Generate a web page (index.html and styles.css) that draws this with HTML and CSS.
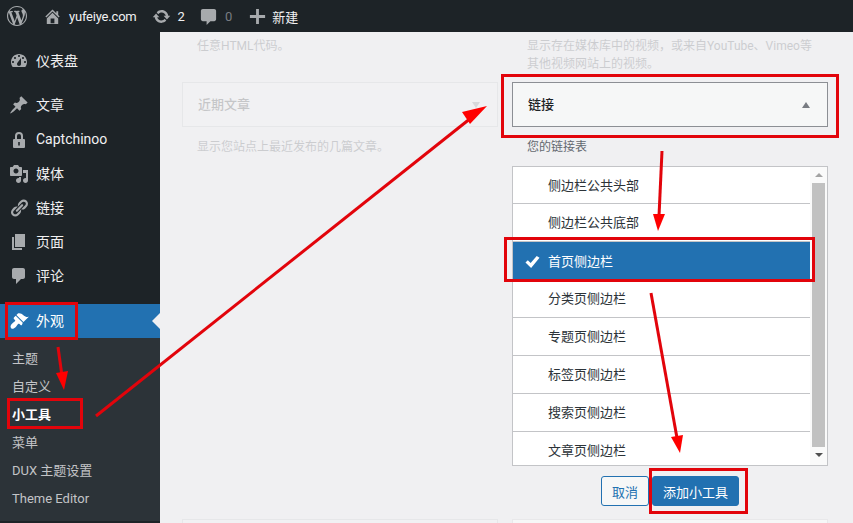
FILE: index.html
```html
<!DOCTYPE html>
<html lang="zh-CN">
<head>
    <meta charset="UTF-8">
    <title>小工具 ‹ yufeiye.com</title>
    <link rel="stylesheet" href="styles.css">
</head>
<body>
    <header class="adminbar">
        <svg class="bar-logo" viewBox="0 0 20 20"><path d="M20 10c0-5.51-4.49-10-10-10C4.48 0 0 4.49 0 10c0 5.52 4.48 10 10 10 5.51 0 10-4.48 10-10zM7.78 15.37L4.37 6.22c.55-.02 1.17-.08 1.17-.08.5-.06.44-1.13-.06-1.11 0 0-1.45.11-2.37.11-.18 0-.37 0-.58-.01C4.12 2.69 6.87 1.11 10 1.11c2.33 0 4.45.87 6.05 2.34-.68-.11-1.65.39-1.65 1.58 0 .74.45 1.36.9 2.1.35.61.55 1.36.55 2.46 0 1.49-1.4 5-1.4 5l-3.03-8.37c.54-.02.82-.17.82-.17.5-.05.44-1.25-.06-1.22 0 0-1.44.12-2.38.12-.87 0-2.33-.12-2.33-.12-.5-.03-.56 1.2-.06 1.22l.92.08 1.26 3.41zM17.41 10c.24-.64.74-1.87.43-4.25.7 1.29 1.05 2.71 1.05 4.25 0 3.29-1.73 6.24-4.4 7.78.97-2.59 1.94-5.2 2.92-7.78zM6.1 18.09C3.12 16.65 1.11 13.53 1.11 10c0-1.3.23-2.48.72-3.59C3.25 10.3 4.67 14.2 6.1 18.09zm4.03-6.63l2.58 6.98c-.86.29-1.76.45-2.71.45-.79 0-1.57-.11-2.29-.33.81-2.38 1.62-4.74 2.42-7.1z"/></svg>
        <a class="bar-item site">
            <svg class="bar-icon" viewBox="0 0 20 20"><path d="M16 8.5l1.53 1.53-1.06 1.06L10 4.62l-6.47 6.47-1.06-1.06L10 2.5l4 4v-2h2v4zm-6-2.46l6 5.99V18H4v-5.97zM12 17v-5H8v5h4z"/></svg>
            <span>yufeiye.com</span>
        </a>
        <a class="bar-item updates">
            <svg class="bar-icon" viewBox="0 0 20 20"><path d="M10.2 3.28c3.53 0 6.43 2.61 6.92 6h2.08l-3.5 4-3.5-4h2.32c-.45-1.97-2.21-3.45-4.32-3.45-1.45 0-2.73.71-3.54 1.78L4.95 5.66C6.23 4.2 8.11 3.28 10.2 3.28zm-.4 13.44c-3.52 0-6.43-2.61-6.92-6H.8l3.5-4c1.17 1.33 2.33 2.67 3.5 4H5.48c.45 1.97 2.21 3.45 4.32 3.45 1.45 0 2.73-.71 3.54-1.78l1.71 1.95c-1.28 1.46-3.15 2.38-5.25 2.38z"/></svg>
            <span>2</span>
        </a>
        <a class="bar-item comments">
            <svg class="bar-icon" viewBox="0 0 20 20"><path d="M4 2h12c1.100 0 2 .9 2 2v9c0 1.100-.9 2-2 2h-4l-4 4v-4H4c-1.100 0-2-.9-2-2V4c0-1.100.9-2 2-2z"/></svg>
            <span class="count-zero">0</span>
        </a>
        <a class="bar-item new">
            <svg class="bar-icon" viewBox="0 0 20 20"><path d="M11.500 2v6.500H18v3h-6.500V18h-3v-6.500H2v-3h6.500V2z"/></svg>
            <span>新建</span>
        </a>
    </header>

    <div class="layout">
        <aside class="sidebar">
            <ul class="menu">
                <li class="menu-item dash">
                    <svg class="menu-icon" viewBox="0 0 20 20"><path d="M3.76 16h12.48c1.100-1.370 1.760-3.110 1.760-5 0-4.420-3.580-8-8-8s-8 3.580-8 8c0 1.890.66 3.630 1.760 5zM10 4c.55 0 1 .45 1 1s-.45 1-1 1-1-.45-1-1 .45-1 1-1zM6 6c.55 0 1 .45 1 1s-.45 1-1 1-1-.45-1-1 .45-1 1-1zm8 0c.55 0 1 .45 1 1s-.45 1-1 1-1-.45-1-1 .45-1 1-1zm-5.370 5.550L12 7v6c0 1.100-.9 2-2 2s-2-.9-2-2c0-.57.24-1.080.63-1.450zM4 10c.55 0 1 .45 1 1s-.45 1-1 1-1-.45-1-1 .45-1 1-1zm12 0c.55 0 1 .45 1 1s-.45 1-1 1-1-.45-1-1 .45-1 1-1z"/></svg>
                    <span>仪表盘</span>
                </li>
                <li class="menu-item posts">
                    <svg class="menu-icon" viewBox="0 0 20 20"><path d="M10.44 3.020l1.820-1.820 6.360 6.350-1.830 1.820c-1.050-.68-2.480-.57-3.410.36l-.75.75c-.92.93-1.040 2.350-.35 3.410l-1.830 1.820-2.410-2.410-2.800 2.790c-.42.42-3.380 2.710-3.800 2.290s1.860-3.390 2.280-3.810l2.790-2.790L4.100 9.360l1.830-1.820c1.050.69 2.480.57 3.400-.36l.75-.75c.93-.92 1.050-2.350.36-3.410z"/></svg>
                    <span>文章</span>
                </li>
                <li class="menu-item">
                    <svg class="menu-icon" viewBox="0 0 20 20"><path fill-rule="evenodd" d="M14 9h1a1 1 0 0 1 1 1v7a1 1 0 0 1-1 1H5a1 1 0 0 1-1-1v-7a1 1 0 0 1 1-1h1V6a4 4 0 0 1 8 0zM8 9h4V6a2 2 0 0 0-4 0zm1.200 3v3.500h1.600V12z"/></svg>
                    <span>Captchinoo</span>
                </li>
                <li class="menu-item">
                    <svg class="menu-icon" viewBox="0 0 20 20"><path d="M13 11V4c0-.55-.45-1-1-1h-1.670L9 1H5L3.670 3H2c-.55 0-1 .45-1 1v7c0 .55.45 1 1 1h10c.55 0 1-.45 1-1zM7 4.500c1.380 0 2.500 1.120 2.500 2.500S8.380 9.500 7 9.500 4.500 8.380 4.500 7 5.620 4.500 7 4.500zM14 6h5v10.500c0 1.380-1.120 2.500-2.500 2.500S14 17.880 14 16.500s1.120-2.500 2.500-2.500c.17 0 .34.02.5.05V9h-3V6zm-4 8.050V13h2v3.500c0 1.380-1.120 2.500-2.500 2.500S7 17.880 7 16.500 8.120 14 9.500 14c.17 0 .34.02.5.05z"/></svg>
                    <span>媒体</span>
                </li>
                <li class="menu-item">
                    <svg class="menu-icon" viewBox="0 0 20 20"><path d="M17.740 2.760c1.680 1.690 1.680 4.410 0 6.100l-1.530 1.520c-1.120 1.120-2.700 1.470-4.140 1.090l2.620-2.610.76-.77.76-.76c.84-.84.84-2.200 0-3.040-.84-.85-2.200-.85-3.040 0l-.77.76-3.380 3.380c-.37-1.440-.02-3.020 1.100-4.140l1.520-1.530c1.690-1.680 4.420-1.680 6.100 0zM8.590 13.430l5.340-5.340c.42-.42.42-1.100 0-1.520-.44-.43-1.130-.39-1.530 0l-5.330 5.340c-.42.42-.42 1.100 0 1.520.44.43 1.130.39 1.520 0zm-.76 2.290l4.140-4.150c.38 1.440.03 3.020-1.090 4.140l-1.520 1.530c-1.690 1.680-4.410 1.680-6.100 0-1.680-1.680-1.680-4.420 0-6.100l1.530-1.520c1.120-1.120 2.700-1.470 4.140-1.100l-4.140 4.150c-.85.84-.85 2.200 0 3.050.84.84 2.200.84 3.040 0z"/></svg>
                    <span>链接</span>
                </li>
                <li class="menu-item">
                    <svg class="menu-icon" viewBox="0 0 20 20"><path d="M6 15V2h10v13H6zm-1 1h8v2H3V5h2v11z"/></svg>
                    <span>页面</span>
                </li>
                <li class="menu-item">
                    <svg class="menu-icon" viewBox="0 0 20 20"><path d="M5 2h9c1.100 0 2 .9 2 2v7c0 1.100-.9 2-2 2h-2l-5 5v-5H5c-1.100 0-2-.9-2-2V4c0-1.100.9-2 2-2z"/></svg>
                    <span>评论</span>
                </li>
                <li class="menu-item current">
                    <svg class="menu-icon" viewBox="0 0 20 20"><path d="M14.480 11.060L7.410 3.990l1.500-1.500c.5-.56 2.300-.47 3.510.32 1.210.8 1.430 1.280 2.910 2.100 1.180.64 2.450 1.260 4.450.85zm-.71.71L6.700 4.700 4.930 6.470c-.39.39-.39 1.020 0 1.410l1.060 1.060c.39.39.39 1.030 0 1.420-.6.6-1.430 1.110-2.210 1.690-.35.26-.7.53-1.010.84-1.340 1.340-1.660 3.230-.57 4.310s3.010.3 4.340-1.010c.31-.31.58-.66.84-1.010.58-.78 1.100-1.610 1.690-2.210.39-.39 1.020-.39 1.410 0l1.060 1.060c.39.39 1.020.39 1.410 0z"/></svg>
                    <span>外观</span>
                </li>
            </ul>
            <ul class="submenu">
                <li>主题</li>
                <li>自定义</li>
                <li class="active">小工具</li>
                <li>菜单</li>
                <li>DUX 主题设置</li>
                <li>Theme Editor</li>
            </ul>
        </aside>

        <main class="content">
            <div class="widget-col faded">
                <p class="desc top-desc">任意HTML代码。</p>
                <div class="widget-title">
                    <span>近期文章</span>
                    <i class="caret down"></i>
                </div>
                <p class="desc">显示您站点上最近发布的几篇文章。</p>
                <div class="next-widget"></div>
            </div>

            <div class="widget-col">
                <p class="desc top-desc faded">显示存在媒体库中的视频，或来自YouTube、Vimeo等其他视频网站上的视频。</p>
                <div class="widget-title open">
                    <span>链接</span>
                    <i class="caret"></i>
                </div>
                <p class="desc link-desc">您的链接表</p>

                <div class="chooser">
                    <ul class="sidebars">
                        <li>侧边栏公共头部</li>
                        <li>侧边栏公共底部</li>
                        <li class="selected">
                            <svg class="check" viewBox="0 0 16 14"><path d="M0.500 7.500L3 5l3 3L12.500 0.500 15.500 2.500 6.500 13.500z"/></svg>
                            首页侧边栏
                        </li>
                        <li>分类页侧边栏</li>
                        <li>专题页侧边栏</li>
                        <li>标签页侧边栏</li>
                        <li>搜索页侧边栏</li>
                        <li>文章页侧边栏</li>
                    </ul>
                    <div class="scrollbar">
                        <i class="arrow-up"></i>
                        <div class="thumb"></div>
                        <i class="arrow-down"></i>
                    </div>
                </div>

                <div class="actions">
                    <button class="btn">取消</button>
                    <button class="btn primary">添加小工具</button>
                </div>
                <div class="next-widget soft"></div>
            </div>
        </main>
    </div>

    <svg class="notes" viewBox="0 0 853 523">
        <g class="note-box">
            <rect x="6.500" y="303.500" width="70" height="35"/>
            <rect x="8.500" y="399.500" width="73" height="28"/>
            <rect x="502.500" y="75.500" width="335" height="61"/>
            <rect x="505.500" y="238.500" width="308" height="42"/>
            <rect x="650.500" y="469.500" width="96" height="43"/>
        </g>
        <g class="note-line">
            <line x1="58" y1="347" x2="62" y2="376"/>
            <line x1="96" y1="416" x2="476" y2="114"/>
            <line x1="662" y1="151" x2="659" y2="216"/>
            <line x1="651" y1="293" x2="677" y2="438"/>
        </g>
        <g class="note-head">
            <polygon points="64,390 56,373 68,371"/>
            <polygon points="487,106 470,124 462,112"/>
            <polygon points="658,231 653,214 665,214"/>
            <polygon points="680,453 671,437 683,435"/>
        </g>
    </svg>
</body>
</html>
```

FILE: styles.css
```css
* {
    margin: 0;
    padding: 0;
    box-sizing: border-box;
}

html, body {
    height: 100%;
    overflow: hidden;
}

body {
    position: relative;
    font-family: Roboto, 'Noto Sans CJK SC', sans-serif;
    font-size: 13px;
    color: #3c434a;
    background: #f0f0f2;
}

ul {
    list-style: none;
}

/* top bar */
.adminbar {
    display: flex;
    align-items: center;
    height: 32px;
    padding-left: 7px;
    background: #1d2327;
    color: #f0f0f1;
    font-size: 13px;
}

.bar-logo {
    width: 20px;
    height: 20px;
    fill: #a7aaad;
}

.bar-item {
    display: flex;
    align-items: center;
    gap: 7px;
}

.bar-icon {
    width: 19px;
    height: 19px;
    fill: #a7aaad;
}

.site {
    margin-left: 16px;
}

.site span {
    letter-spacing: -0.2px;
}

.updates {
    margin-left: 15px;
}

.comments {
    margin-left: 14px;
}

.new {
    gap: 5px;
    margin-left: 16px;
}

.count-zero {
    color: #787c82;
}

/* left menu */
.layout {
    display: flex;
    height: 491px;
}

.sidebar {
    flex: none;
    width: 160px;
    background: #1d2327;
    padding-top: 12px;
}

.menu-item {
    display: flex;
    align-items: center;
    gap: 7px;
    height: 34px;
    padding-left: 9px;
    font-size: 14px;
    color: #f0f0f1;
}

.menu-item span {
    padding-bottom: 2px;
}

.menu-icon {
    flex: none;
    width: 20px;
    height: 20px;
    fill: #a7aaad;
}

.menu-item.dash {
    margin-bottom: 10px;
}

.menu-item.posts {
    margin-bottom: 1px;
}

.menu-item.current {
    position: relative;
    margin-top: 11px;
    background: #2271b1;
    color: #fff;
}

.menu-item.current .menu-icon {
    fill: #fff;
}

.menu-item.current::after {
    content: '';
    position: absolute;
    top: 9px;
    right: 0;
    border: 8px solid transparent;
    border-left-width: 0;
    border-right-color: #f0f0f2;
}

.submenu {
    background: #2c3338;
    padding: 7px 0;
    height: 183px;
}

.submenu li {
    height: 28px;
    line-height: 28px;
    padding-left: 12px;
    font-size: 13px;
    color: #c3c4c7;
}

.submenu li.active {
    color: #fff;
    font-weight: 700;
}

/* widgets */
.content {
    flex: 1;
    display: grid;
    grid-template-columns: 316px 316px;
    column-gap: 14px;
    align-content: start;
    padding: 5px 0 0 22px;
}

.widget-col {
    display: flex;
    flex-direction: column;
}

.faded {
    opacity: 0.2;
}

.desc {
    font-size: 12px;
    line-height: 18px;
    padding: 0 15px;
}

.top-desc {
    height: 45px;
    padding-right: 10px;
    color: #3c434a;
}

.widget-title {
    display: flex;
    align-items: center;
    justify-content: space-between;
    height: 45px;
    padding: 0 17px 0 15px;
    background: #f6f7f7;
    border: 1px solid #c3c4c7;
    font-size: 13px;
    font-weight: 500;
    color: #1d2327;
    margin-bottom: 11px;
}

.widget-title span {
    padding-bottom: 2px;
}

.widget-title.open {
    border-color: #8c8f94;
}

.caret {
    border: 4px solid transparent;
    border-top-width: 0;
    border-bottom: 6px solid #787c82;
}

.caret.down {
    border-top: 6px solid #787c82;
    border-bottom-width: 0;
}

.link-desc {
    color: #646970;
}

.chooser {
    display: flex;
    flex: none;
    height: 300px;
    margin-top: 10px;
    background: #fff;
    border: 1px solid #c3c4c7;
    overflow: hidden;
}

.sidebars {
    flex: 1;
}

.sidebars li {
    position: relative;
    display: flex;
    align-items: center;
    height: 38px;
    padding: 0 0 2px 35px;
    border-bottom: 1px solid #c3c4c7;
    font-size: 13px;
    color: #2c3338;
}

.sidebars li:first-child {
    height: 37px;
}

.sidebars li.selected {
    background: #2271b1;
    border-bottom: 0;
    color: #fff;
}

.check {
    position: absolute;
    left: 12px;
    top: 13px;
    width: 15px;
    height: 14px;
    fill: #fff;
}

.scrollbar {
    flex: none;
    display: flex;
    flex-direction: column;
    align-items: center;
    width: 17px;
    padding-top: 6px;
    background: #fafafa;
}

.thumb {
    width: 13px;
    height: 264px;
    margin: 6px 0;
    background: #c1c1c1;
}

.arrow-up {
    border: 4px solid transparent;
    border-top-width: 0;
    border-bottom: 4px solid #a3a3a3;
}

.arrow-down {
    border: 4px solid transparent;
    border-bottom-width: 0;
    border-top: 4px solid #505050;
}

.actions {
    display: flex;
    gap: 3px;
    margin: 10px 0 0 89px;
}

.btn {
    height: 30px;
    padding: 0 10px;
    border: 1px solid #2271b1;
    border-radius: 3px;
    background: #f6f7f7;
    color: #2271b1;
    font-family: inherit;
    font-size: 13px;
}

.btn.primary {
    background: #2271b1;
    color: #fff;
}

.next-widget {
    flex: none;
    height: 20px;
    margin-top: auto;
    background: #f6f7f7;
    border: 1px solid #c3c4c7;
}

.next-widget.soft {
    margin-top: 13px;
    border-color: #e8e8ea;
}

/* red annotations drawn on top of the shot */
.notes {
    position: absolute;
    top: 0;
    left: 0;
    width: 853px;
    height: 523px;
    pointer-events: none;
}

.note-box rect {
    fill: none;
    stroke: #e2040b;
    stroke-width: 3;
}

.note-line line {
    stroke: #e2040b;
    stroke-width: 3;
}

.note-head polygon {
    fill: #f00;
}
```
